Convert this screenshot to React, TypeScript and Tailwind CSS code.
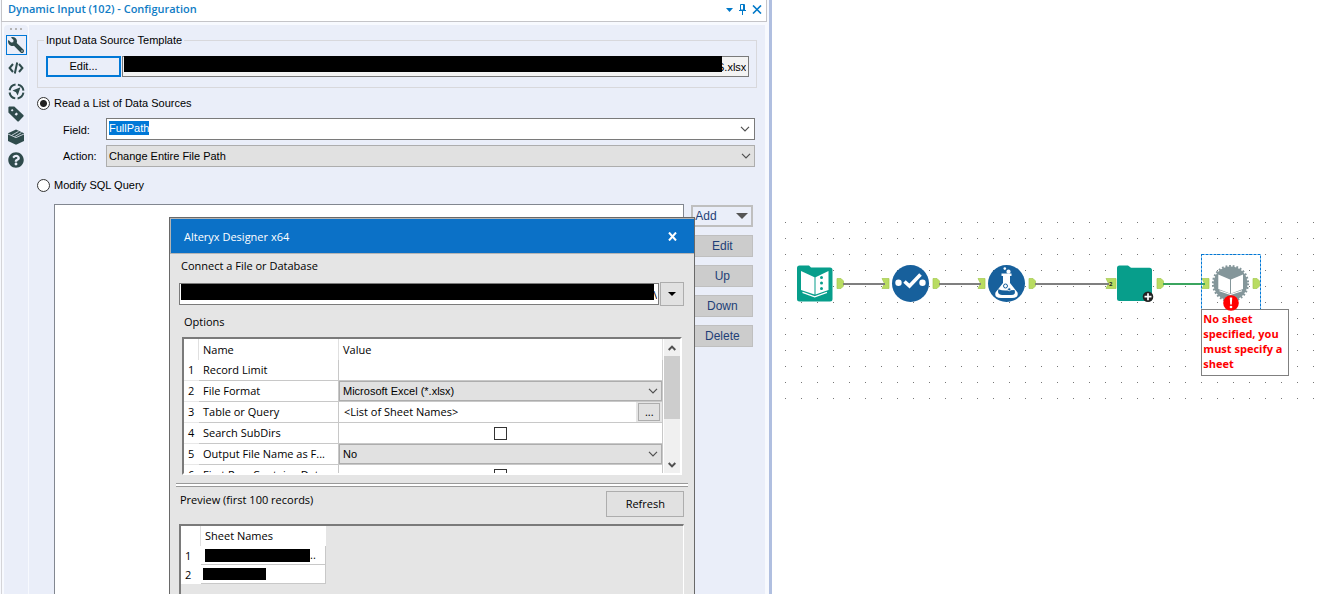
import type { ReactNode } from "react";
import { FaQuestionCircle, FaWrench } from "react-icons/fa";

const UI = "font-['Open_Sans','Noto_Sans',sans-serif]";

function Chevron({ className }: { className: string }) {
  return (
    <svg className={className} width="10" height="6" viewBox="0 0 10 6" fill="none" stroke="#505050" strokeWidth="1.2" aria-hidden="true">
      <path d="M1 .8 5 4.8 9 .8" />
    </svg>
  );
}

function Toolbar() {
  const tools: { name: string; icon: ReactNode }[] = [
    { name: "Configuration", icon: <FaWrench className="size-4 -scale-x-100" /> },
    {
      name: "XML view",
      icon: (
        <svg width="16" height="12" viewBox="0 0 16 12" fill="none" stroke="currentColor" strokeWidth="2">
          <path d="M5 2 1.6 6 5 10M11 2l3.4 4L11 10M9.2 .5 6.8 11.5" />
        </svg>
      ),
    },
    {
      name: "Navigation",
      icon: (
        <svg width="17" height="17" viewBox="0 0 17 17">
          <circle cx="8.5" cy="8.5" r="7" fill="none" stroke="currentColor" strokeWidth="2" strokeDasharray="8.6 2.4" strokeDashoffset="-1.2" />
          <path d="M12.5 4.3 9.7 12.5 7.9 9.3 4.5 7.6Z" fill="currentColor" />
        </svg>
      ),
    },
    {
      name: "Annotation",
      icon: (
        <svg width="16" height="16" viewBox="0 0 16 16">
          <path
            fillRule="evenodd"
            d="M1 .5H6.3L15.6 9.2V10.2L10.6 15.5H9.6L.4 6.4V1.2ZM4.2 2.9 2.8 4.3 4.1 5.6 5.5 4.2ZM8.4 6.4 6.6 8.2 8.2 9.8 10 8Z"
            fill="currentColor"
          />
        </svg>
      ),
    },
    {
      name: "Package",
      icon: (
        <svg width="16" height="16" viewBox="0 0 16 16">
          <path d="M8 .4 16 4.2V12L8 15.8 0 12V4.2Z" fill="currentColor" />
          <path d="M0 5 8 8.6 16 5M3.6 6.4 10.6 2.4M6.6 7.6 13.4 3.6" fill="none" stroke="#eaeef9" strokeWidth=".8" />
        </svg>
      ),
    },
    { name: "Help", icon: <FaQuestionCircle className="size-4" /> },
  ];
  return (
    <nav aria-label="Tool views" className="flex w-6 shrink-0 flex-col items-center rounded-t bg-[#eaeef9] text-[#2f4b4c]">
      <div className="flex h-2 items-center gap-[3px]" aria-hidden="true">
        <i className="size-0.5 bg-[#b4b4b4]" />
        <i className="size-0.5 bg-[#b4b4b4]" />
        <i className="size-0.5 bg-[#b4b4b4]" />
      </div>
      <div className="flex flex-col gap-[3px] pt-0.5">
        {tools.map((t, i) => (
          <button
            key={t.name}
            type="button"
            aria-label={t.name}
            className={
              i === 0
                ? "flex h-5 w-[21px] items-center justify-center border border-[#0078d7]"
                : "flex h-5 w-[21px] items-center justify-center"
            }
          >
            {t.icon}
          </button>
        ))}
      </div>
    </nav>
  );
}

function SideButton({ children }: { children: ReactNode }) {
  return (
    <button type="button" className="h-[22px] border border-[#bfbfbf] bg-[#cccccc] text-center text-[#1f3f77]">
      {children}
    </button>
  );
}

function OptionRow({ n, name, children }: { n: number; name: string; children?: ReactNode }) {
  return (
    <tr className="h-[21px]">
      <td className="border-b border-[#e8e8e8] p-0 pl-1">{n}</td>
      <td className="truncate border-r border-b border-[#c8c8c8] p-0 pl-1">{name}</td>
      <td className="border-r border-b border-[#c8c8c8] p-0">{children}</td>
    </tr>
  );
}

function CellSelect({ label, value }: { label: string; value: string }) {
  return (
    <div className="relative h-5">
      <select aria-label={label} className="h-5 w-full appearance-none border border-[#adadad] bg-[#e1e1e1] pl-[3px] font-['Liberation_Sans',sans-serif] text-[11px]">
        <option>{value}</option>
      </select>
      <Chevron className="pointer-events-none absolute top-[7px] right-1" />
    </div>
  );
}

function CellCheck({ label }: { label: string }) {
  return (
    <div className="flex h-5 items-center justify-center">
      <input type="checkbox" aria-label={label} className="size-[13px] appearance-none border border-[#333] bg-white" />
    </div>
  );
}

function Dialog() {
  return (
    <section
      role="dialog"
      aria-label="Alteryx Designer x64"
      className={`absolute top-[217px] right-[74px] bottom-0 left-[169px] flex flex-col border border-b-0 border-[#696969] bg-[#e5e5e5] text-[11px] text-black ${UI}`}
    >
      <header className="flex h-9 shrink-0 items-center justify-between border border-r-0 border-[#b5b5b5] bg-[#0b71c7] pr-4 pl-[13px] text-white">
        <h2 className="pt-0.5">Alteryx Designer x64</h2>
        <button type="button" aria-label="Close" className="flex size-3 items-center justify-center">
          <svg width="9" height="9" viewBox="0 0 9 9" stroke="#fff" strokeWidth="2">
            <path d="M1 .5 8 8.5M8 .5 1 8.5" />
          </svg>
        </button>
      </header>

      <div className="flex shrink-0 flex-col pr-2.5 pl-[9px]">
        <label htmlFor="connection" className="mt-1 pl-0.5 leading-4">
          Connect a File or Database
        </label>
        <div className="mt-2 flex items-center gap-px">
          <div className="relative h-[22px] min-w-0 flex-1">
            <input id="connection" readOnly value="\" className="h-full w-full border border-[#7a7a7a] bg-white pr-px text-right" />
            <i className="absolute top-px right-[5px] left-0.5 h-4 bg-black" />
          </div>
          <button type="button" aria-label="Recent connections" className="flex h-6 w-6 items-center justify-center border border-[#adadad] bg-[#e1e1e1]">
            <svg width="8" height="4" viewBox="0 0 8 4">
              <path d="M0 0H8L4 4Z" />
            </svg>
          </button>
        </div>

        <h3 className="mt-2 pl-[5px] leading-4">Options</h3>
        <div className="mt-[7px] mr-0.5 ml-[3px] flex h-[138px] overflow-hidden border-t-2 border-r-2 border-b-2 border-l-2 border-t-[#7a7a7a] border-r-white border-b-white border-l-[#7a7a7a] bg-white">
          <div className="min-w-0 flex-1 overflow-hidden">
            <table className="w-full table-fixed border-separate border-spacing-0 leading-4">
              <colgroup>
                <col className="w-[15px]" />
                <col className="w-[140px]" />
                <col />
              </colgroup>
              <thead>
                <tr className="h-[21px] text-left">
                  <th className="border-r border-[#e0e0e0] p-0" aria-label="Row" />
                  <th className="border-r border-[#e0e0e0] p-0 pl-1 font-normal">Name</th>
                  <th className="border-r border-[#e0e0e0] p-0 pl-1 font-normal">Value</th>
                </tr>
              </thead>
              <tbody>
                <OptionRow n={1} name="Record Limit" />
                <OptionRow n={2} name="File Format">
                  <CellSelect label="File Format" value="Microsoft Excel (*.xlsx)" />
                </OptionRow>
                <OptionRow n={3} name="Table or Query">
                  <div className="flex h-5 items-center justify-between pl-[5px]">
                    <span>&lt;List of Sheet Names&gt;</span>
                    <span className="flex h-5 items-center bg-[#e5e5e5] px-0.5">
                      <button type="button" aria-label="Choose table or query" className="h-[18px] w-[22px] border border-[#adadad] bg-[#e1e1e1] leading-3">
                        ...
                      </button>
                    </span>
                  </div>
                </OptionRow>
                <OptionRow n={4} name="Search SubDirs">
                  <CellCheck label="Search SubDirs" />
                </OptionRow>
                <OptionRow n={5} name="Output File Name as F...">
                  <CellSelect label="Output File Name as Field" value="No" />
                </OptionRow>
                <OptionRow n={6} name="First Row Contains Data">
                  <CellCheck label="First Row Contains Data" />
                </OptionRow>
              </tbody>
            </table>
          </div>
          <div className="ml-px flex w-4 shrink-0 flex-col items-center bg-[#f0f0f0]" aria-hidden="true">
            <svg className="mt-[6px]" width="8" height="6" viewBox="0 0 8 6" fill="none" stroke="#505050" strokeWidth="2">
              <path d="M.7 5 4 1.6 7.3 5" />
            </svg>
            <i className="mt-[5px] h-[63px] w-full bg-[#cdcdcd]" />
            <svg className="mt-auto mb-[5px]" width="8" height="6" viewBox="0 0 8 6" fill="none" stroke="#505050" strokeWidth="2">
              <path d="M.7 1 4 4.4 7.3 1" />
            </svg>
          </div>
        </div>
      </div>

      <hr className="mx-1.5 mt-2 h-1 shrink-0 border-t border-b border-[#9a9a9a] bg-white" />

      <div className="flex min-h-0 flex-1 flex-col pr-2.5 pl-[9px]">
        <div className="mt-1 flex shrink-0 items-start justify-between pl-px">
          <h3 className="pt-px leading-4">Preview (first 100 records)</h3>
          <button type="button" className="h-[26px] w-[78px] border border-[#adadad] bg-[#e1e1e1]">
            Refresh
          </button>
        </div>
        <div className="mt-[7px] min-h-0 flex-1 overflow-hidden border-t-2 border-r border-l-2 border-t-[#7a7a7a] border-r-white border-l-[#7a7a7a]">
          <table className="w-[145px] table-fixed border-separate border-spacing-0 bg-white leading-4">
            <colgroup>
              <col className="w-5" />
              <col />
            </colgroup>
            <thead>
              <tr className="h-5 text-left">
                <th className="border-r border-[#e0e0e0] p-0" aria-label="Row" />
                <th className="p-0 pl-1 font-normal">Sheet Names</th>
              </tr>
            </thead>
            <tbody>
              <tr className="h-[19px]">
                <td className="p-0 pl-1">1</td>
                <td className="border-r border-b border-[#c8c8c8] p-0 pl-1">
                  <div className="flex h-[18px] items-center">
                    <i className="h-[13px] w-[105px] bg-black" />
                    ..
                  </div>
                </td>
              </tr>
              <tr className="h-[19px]">
                <td className="p-0 pl-1">2</td>
                <td className="border-r border-b border-[#c8c8c8] p-0 pl-0.5">
                  <div className="flex h-[18px] items-center">
                    <i className="h-3 w-[63px] bg-black" />
                  </div>
                </td>
              </tr>
            </tbody>
          </table>
        </div>
      </div>
    </section>
  );
}

function ConfigPanel() {
  return (
    <section
      aria-label="Configuration"
      className="relative flex w-7/12 shrink-0 flex-col border-r-3 border-[#b0bfe0] bg-[#f7f9fe] pl-px font-['Liberation_Sans',sans-serif] text-[11px] text-black"
    >
      <header className={`mr-0.5 flex h-[22px] shrink-0 items-center justify-between border border-t-0 border-[#c4c4c8] bg-white pr-1 pb-0.5 pl-1.5 text-[#0f7cc5] ${UI}`}>
        <h1 className="font-semibold">Dynamic Input (102) - Configuration</h1>
        <div className="flex items-center gap-1.5">
          <button type="button" aria-label="Window options">
            <svg className="block" width="7" height="4" viewBox="0 0 7 4" fill="#0078c8">
              <path d="M0 0H7L3.5 4Z" />
            </svg>
          </button>
          <button type="button" aria-label="Pin">
            <svg className="block" width="7" height="11" viewBox="0 0 7 11" fill="none" stroke="#0078c8">
              <path d="M1.5 .5H5.5V6H1.5ZM4.5 .5V6M0 6.5H7M3.5 6.5V11" />
            </svg>
          </button>
          <button type="button" aria-label="Close configuration">
            <svg className="block" width="10" height="9" viewBox="0 0 10 9" stroke="#0078c8" strokeWidth="1.6">
              <path d="M1 .5 9 8.5M9 .5 1 8.5" />
            </svg>
          </button>
        </div>
      </header>

      <div className="mr-px flex min-h-0 flex-1 gap-px border-l border-[#d4d4d8] pt-[3px] pr-[3px] pl-0.5">
        <Toolbar />
        <form className="flex min-w-0 flex-1 flex-col bg-[#eaeef9] pr-2 pl-2">
          <fieldset className="mt-2 border border-[#d8d8dc] pr-[7px] pb-2.5 pl-2">
            <legend className="-ml-0.5 px-0.5 leading-[14px]">Input Data Source Template</legend>
            <div className="mt-[9px] flex items-center gap-px">
              <button type="button" className="h-[21px] w-[75px] border-2 border-[#0078d7] bg-[#eaeef9]">
                Edit...
              </button>
              <div className="relative h-[21px] min-w-0 flex-1">
                <input aria-label="Template path" readOnly value="S.xlsx" className="h-full w-full border border-[#7a7a7a] bg-[#f3f3f3] pr-0.5 text-right" />
                <i className="absolute top-0 right-[27px] left-0.5 h-4 bg-black" />
              </div>
            </div>
          </fieldset>

          <label className="mt-[7px] flex h-4 items-center gap-1">
            <input
              type="radio"
              name="mode"
              defaultChecked
              className="size-[13px] appearance-none rounded-full border border-[#333] bg-white bg-[radial-gradient(circle,#222_3px,transparent_4px)]"
            />
            Read a List of Data Sources
          </label>

          <div className="mt-[7px] grid grid-cols-[43px_1fr] gap-y-[5px] pr-0.5 pl-[26px]">
            <label htmlFor="field" className="self-center pt-0.5">
              Field:
            </label>
            <div className="relative flex h-[22px] items-start border border-[#7a7a7a] bg-white pt-0.5 pl-0.5">
              <input id="field" defaultValue="FullPath" className="[field-sizing:content] h-[14px] bg-[#0078d7] text-white" />
              <button type="button" aria-label="Show fields" className="absolute top-[7px] right-1">
                <Chevron className="block" />
              </button>
            </div>
            <label htmlFor="action" className="self-center">
              Action:
            </label>
            <div className="relative h-[22px]">
              <select id="action" className="h-full w-full appearance-none border border-[#adadad] bg-[#e1e1e1] pl-0.5">
                <option>Change Entire File Path</option>
              </select>
              <Chevron className="pointer-events-none absolute top-2 right-1" />
            </div>
          </div>

          <label className="mt-2.5 flex h-4 items-center gap-1">
            <input type="radio" name="mode" className="size-[13px] appearance-none rounded-full border border-[#333] bg-white" />
            Modify SQL Query
          </label>

          <div className="mt-[11px] flex min-h-0 flex-1 gap-[7px] pr-1 pl-[17px]">
            <div role="listbox" aria-label="SQL modifications" className="min-w-0 flex-1 border border-b-0 border-[#828790] bg-white" />
            <div className="flex w-[62px] flex-col gap-2 pt-px text-xs">
              <button type="button" className="flex h-[22px] items-center justify-between border-2 border-[#bfbfbf] pr-[3px] pl-0.5 text-[#1f3f77]">
                Add
                <svg width="12" height="6" viewBox="0 0 12 6" fill="#555">
                  <path d="M0 0H12L6 6Z" />
                </svg>
              </button>
              <SideButton>Edit</SideButton>
              <SideButton>Up</SideButton>
              <SideButton>Down</SideButton>
              <SideButton>Delete</SideButton>
            </div>
          </div>
        </form>
      </div>
      <Dialog />
    </section>
  );
}

function OutputAnchor({ x }: { x: number }) {
  return <path d={`M${x} 278.500H${x + 4}L${x + 6.5} 281V286L${x + 4} 288.500H${x}Z`} fill="#b9dc62" stroke="#a3c950" strokeWidth=".7" />;
}

function InputAnchor({ x, width = 7 }: { x: number; width?: number }) {
  return <path d={`M${x} 278.500H${x + width}V288.500H${x}L${x + 2.5} 283.500Z`} fill="#b9dc62" stroke="#a3c950" strokeWidth=".7" />;
}

function WorkflowDrawing() {
  return (
    <svg className="absolute top-[210px] left-0" width="552" height="200" viewBox="772 210 552 200" role="img" aria-label="Workflow">
      <defs>
        <pattern id="grid" x="785" y="222" width="16" height="16" patternUnits="userSpaceOnUse">
          <rect width="1" height="1" fill="#777" />
        </pattern>
      </defs>
      <rect x="785" y="222" width="530" height="178" fill="url(#grid)" />

      <g>
        <path d="M797 268q0-2.500 2.500-2.500H809l2 2H830q2.500 0 2.500 2.500V299q0 2.500-2.500 2.500H799.500q-2.500 0-2.500-2.500Z" fill="#079e8b" />
        <path d="M801 271 814.500 277.300V294.500L801 290ZM828.500 271 815.500 277.300V294.500L828.500 290Z" fill="#fff" />
        <path d="M802.500 292.300 814.700 296.800 827 292.300" fill="none" stroke="#fff" strokeWidth="1.300" />
        <g fill="#079e8b">
          <circle cx="821.500" cy="277.500" r="1.500" />
          <circle cx="821.500" cy="283" r="1.500" />
          <circle cx="821.500" cy="288.500" r="1.500" />
        </g>
      </g>

      <g>
        <circle cx="910.500" cy="283.500" r="18.500" fill="#17609c" />
        <circle cx="898.500" cy="282.700" r="3.200" fill="#fff" />
        <circle cx="922.500" cy="282.700" r="3.200" fill="#fff" />
        <path d="M904.500 281.500 909.500 286 920.500 274.500" fill="none" stroke="#fff" strokeWidth="3.600" />
      </g>

      <g>
        <circle cx="1006.500" cy="283.500" r="18.500" fill="#17609c" />
        <path d="M1001.500 273.500H1011.500V276H1010V283L1017.500 292.500Q1019 298 1012 298H1001Q994 298 995.500 292.500L1003 283V276H1001.500Z" fill="#fff" />
        <path d="M998.300 289.300Q1003 291 1007 290.500T1014.500 290Q1016.500 295 1011 295H1002Q997 295 998.300 289.300Z" fill="#17609c" />
        <circle cx="1008.500" cy="271.700" r="2.100" fill="#fff" />
        <circle cx="1004.800" cy="268.600" r="1.300" fill="#fff" />
        <circle cx="1005.500" cy="286" r="2" fill="#fff" stroke="#17609c" />
        <circle cx="1009.200" cy="289.300" r="1.500" fill="#17609c" stroke="#fff" strokeWidth=".7" />
      </g>

      <g>
        <path d="M1117 268q0-2.500 2.500-2.500H1128l3 2.200H1149.500q2.500 0 2.500 2.500V298.500q0 2.500-2.500 2.500H1119.500q-2.500 0-2.500-2.500Z" fill="#079e8b" />
        <circle cx="1148" cy="296.700" r="5.300" fill="#222" />
        <path d="M1148 293.200V300.200M1144.500 296.700H1151.500" stroke="#fff" strokeWidth="1.700" />
      </g>

      <g>
        <circle cx="1230.500" cy="283.500" r="17" fill="#84969a" />
        <circle cx="1230.500" cy="283.500" r="17.500" fill="none" stroke="#84969a" strokeWidth="2.200" strokeDasharray="1.830 1.830" />
        <path d="M1218.300 274.500 1230 279.500V293.500L1218.300 289ZM1243 274.500 1231 279.500V293.500L1243 289Z" fill="#fff" />
        <path d="M1219.500 290.800 1230.500 294.500 1242 290.800" fill="none" stroke="#fff" strokeWidth="1.100" />
      </g>

      <OutputAnchor x={837} />
      <InputAnchor x={882} />
      <OutputAnchor x={933} />
      <InputAnchor x={978} />
      <OutputAnchor x={1029} />
      <InputAnchor x={1106} width={10} />
      <OutputAnchor x={1157} />
      <InputAnchor x={1202} />
      <OutputAnchor x={1253} />
      <path d="M843 284H885M939 284H981M1035 284H1109" stroke="#7f7f7f" strokeWidth="2" />
      <path d="M1163 284H1205" stroke="#3ba55f" strokeWidth="2" />
      <text x="1109" y="286" className="font-['Open_Sans',sans-serif] text-[6px] font-bold" fill="#222">2</text>

      <rect x="1201.500" y="254.500" width="59" height="60" fill="none" stroke="#0078d7" strokeDasharray="3 1" />
    </svg>
  );
}

export default function App() {
  return (
    <div className="flex h-screen overflow-hidden bg-white">
      <ConfigPanel />
      <main aria-label="Workflow canvas" className="relative min-w-0 flex-1 overflow-hidden">
        <WorkflowDrawing />
        <p className={`absolute top-[309px] left-[429px] h-[67px] w-[88px] border border-[#808080] bg-white pt-px pl-px text-[11px] leading-[15px] font-bold text-[#fe0000] ${UI}`}>
          No sheet specified, you must specify a sheet
        </p>
        <svg className="absolute top-[295px] left-[451px]" width="16" height="16" viewBox="0 0 16 16" aria-hidden="true">
          <circle cx="8" cy="8" r="7.800" fill="#f00" />
          <path d="M6.800 2.500H9.200L8.800 9.500H7.200Z" fill="#fff" />
          <circle cx="8" cy="12" r="1.300" fill="#fff" />
        </svg>
      </main>
    </div>
  );
}
